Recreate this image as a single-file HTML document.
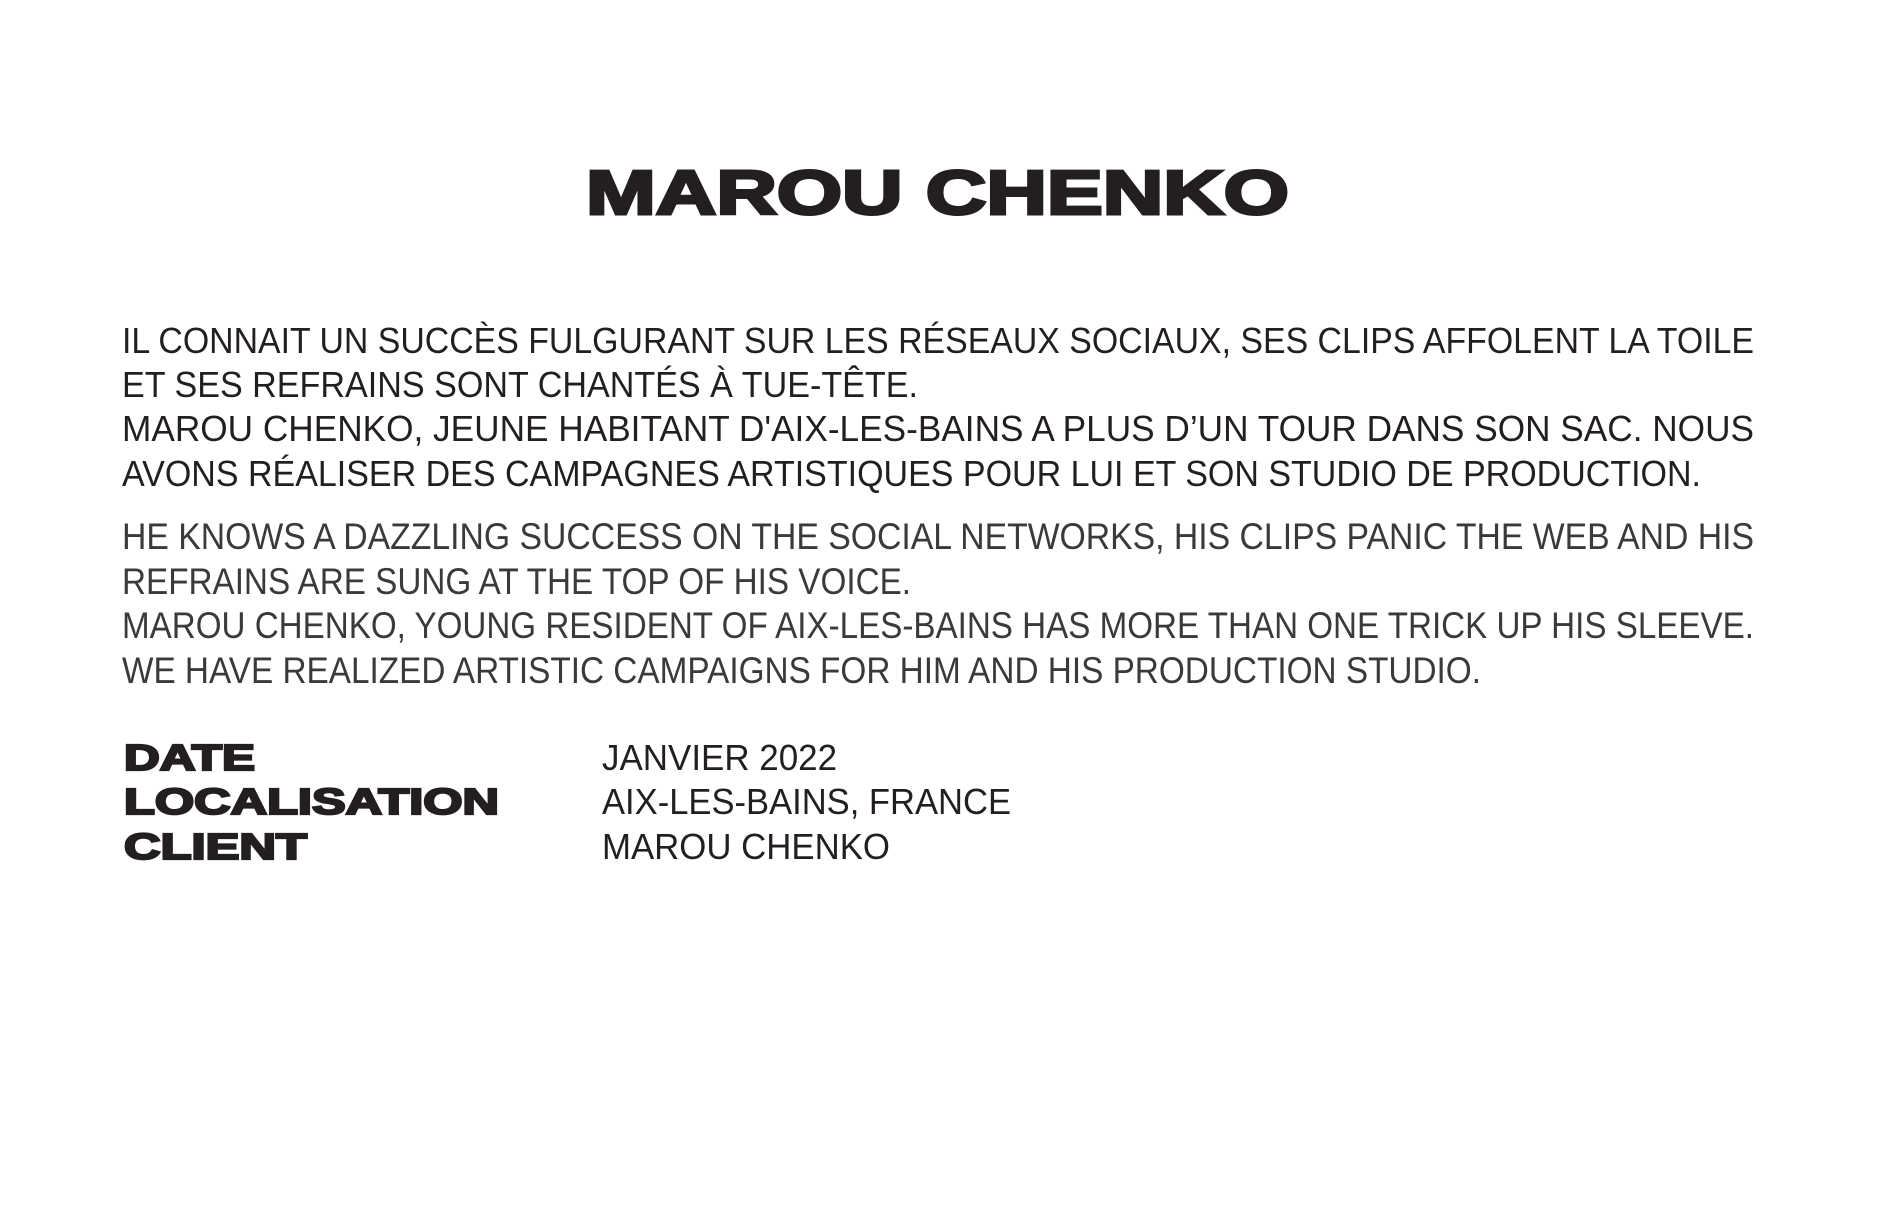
<!DOCTYPE html>
<html><head><meta charset="utf-8"><style>
html,body{margin:0;padding:0;background:#fff;width:1877px;height:1227px;overflow:hidden}
svg{display:block}
.t{font-family:"Liberation Sans",sans-serif;fill:#231f20}
.b{font-weight:bold;stroke:#231f20;stroke-width:2.2px;paint-order:stroke}
.r{font-size:36px}
.l{font-size:37px;fill:#3a3a3a;font-weight:normal}
</style></head><body>
<svg width="1877" height="1227" viewBox="0 0 1877 1227" xmlns="http://www.w3.org/2000/svg">
<text class="t b" x="586" y="214" font-size="62" textLength="703" lengthAdjust="spacingAndGlyphs" style="stroke-width:3px">MAROU CHENKO</text>

<text class="t r" x="122" y="353" textLength="1632" lengthAdjust="spacingAndGlyphs">IL CONNAIT UN SUCCÈS FULGURANT SUR LES RÉSEAUX SOCIAUX, SES CLIPS AFFOLENT LA TOILE</text>
<text class="t r" x="122" y="397" textLength="796" lengthAdjust="spacingAndGlyphs">ET SES REFRAINS SONT CHANTÉS À TUE-TÊTE.</text>
<text class="t r" x="122" y="441" textLength="1632" lengthAdjust="spacingAndGlyphs">MAROU CHENKO, JEUNE HABITANT D'AIX-LES-BAINS A PLUS D’UN TOUR DANS SON SAC. NOUS</text>
<text class="t r" x="122" y="486" textLength="1579" lengthAdjust="spacingAndGlyphs">AVONS RÉALISER DES CAMPAGNES ARTISTIQUES POUR LUI ET SON STUDIO DE PRODUCTION.</text>

<text class="t l" x="122" y="549" textLength="1632" lengthAdjust="spacingAndGlyphs">HE KNOWS A DAZZLING SUCCESS ON THE SOCIAL NETWORKS, HIS CLIPS PANIC THE WEB AND HIS</text>
<text class="t l" x="122" y="594" textLength="789" lengthAdjust="spacingAndGlyphs">REFRAINS ARE SUNG AT THE TOP OF HIS VOICE.</text>
<text class="t l" x="122" y="638" textLength="1632" lengthAdjust="spacingAndGlyphs">MAROU CHENKO, YOUNG RESIDENT OF AIX-LES-BAINS HAS MORE THAN ONE TRICK UP HIS SLEEVE.</text>
<text class="t l" x="122" y="683" textLength="1359" lengthAdjust="spacingAndGlyphs">WE HAVE REALIZED ARTISTIC CAMPAIGNS FOR HIM AND HIS PRODUCTION STUDIO.</text>

<text class="t b" x="124" y="770" font-size="36" textLength="131" lengthAdjust="spacingAndGlyphs">DATE</text>
<text class="t b" x="124" y="814" font-size="36" textLength="375" lengthAdjust="spacingAndGlyphs">LOCALISATION</text>
<text class="t b" x="124" y="859" font-size="36" textLength="183" lengthAdjust="spacingAndGlyphs">CLIENT</text>

<text class="t r" x="602" y="770" textLength="235" lengthAdjust="spacingAndGlyphs">JANVIER 2022</text>
<text class="t r" x="602" y="814" textLength="409" lengthAdjust="spacingAndGlyphs">AIX-LES-BAINS, FRANCE</text>
<text class="t r" x="602" y="859" textLength="288" lengthAdjust="spacingAndGlyphs">MAROU CHENKO</text>
</svg>
</body></html>
